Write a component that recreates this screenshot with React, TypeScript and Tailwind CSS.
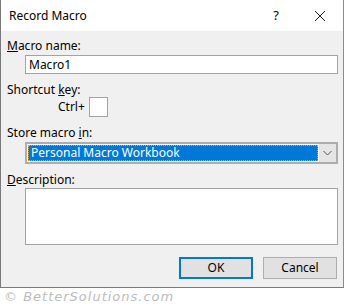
import { useState } from 'react';

export default function App() {
  const [name, setName] = useState('Macro1');

  return (
    <div className="w-[344px] h-[307px] bg-white flex flex-col font-['Noto_Sans',sans-serif] text-[12px] text-black">
      <div className="h-[288px] flex flex-col border-l border-r border-b border-[#7a7a7a] border-r-[#8c8c8c]">
        {/* title bar */}
        <div className="h-[31px] bg-white flex items-center shrink-0">
          <span className="pl-[8px] text-[12px] leading-none">Record Macro</span>
          <span className="ml-auto w-[8px] text-[13px] leading-none text-center mr-[34px]">?</span>
          <svg width="12" height="12" viewBox="0 0 12 12" className="mr-[17px]">
            <path d="M1 1 L11 11 M11 1 L1 11" stroke="#222" strokeWidth="1" fill="none" />
          </svg>
        </div>

        {/* body */}
        <div className="flex-1 bg-[#f0f0f0] flex flex-col pl-[6px] pr-[5px] pt-[7px]">
          <div className="h-[16px] leading-[16px]">
            <span className="underline">M</span>acro name:
          </div>
          <input
            value={name}
            onChange={(e) => setName(e.target.value)}
            className="ml-[18px] mt-[1px] h-[19px] border border-[#a3a3a3] bg-white px-[3px] text-[12px] leading-none outline-none"
          />

          <div className="h-[16px] leading-[16px] mt-[8px]">
            Shortcut <span className="underline">k</span>ey:
          </div>
          <div className="flex items-center h-[20px] mt-[-1px]">
            <span className="ml-[51px]">Ctrl+</span>
            <div className="ml-[4px] w-[19px] h-[20px] border border-[#a3a3a3] bg-white"></div>
          </div>

          <div className="h-[16px] leading-[16px] mt-[8px]">
            Store macro <span className="underline">i</span>n:
          </div>
          <div className="ml-[18px] mt-[1px] h-[22px] flex border-2 border-[#adadad] bg-white">
            <div className="flex-1 m-[1px] bg-[#0078d7] outline outline-1 outline-dotted outline-[#f0a040] -outline-offset-1 flex items-center px-[3px] text-white leading-none">
              Personal Macro Workbook
            </div>
            <div className="w-[17px] bg-[#e5e5e5] flex items-center justify-center">
              <svg width="9" height="6" viewBox="0 0 9 6">
                <path d="M0.5 1 L4.5 5 L8.5 1" stroke="#555" strokeWidth="1" fill="none" />
              </svg>
            </div>
          </div>

          <div className="h-[16px] leading-[16px] mt-[8px]">
            <span className="underline">D</span>escription:
          </div>
          <div className="ml-[18px] h-[57px] border border-[#a3a3a3] bg-white"></div>

          <div className="flex justify-end gap-[10px] mt-[12px] pr-[1px]">
            <button className="w-[74px] h-[22px] border-2 border-[#0078d7] bg-[#e1e1e1] leading-none">OK</button>
            <button className="w-[74px] h-[22px] border border-[#adadad] bg-[#e1e1e1] leading-none">Cancel</button>
          </div>
        </div>
      </div>

      {/* watermark */}
      <div className="pl-[4px] pt-[1px] font-['DejaVu_Sans',sans-serif] italic text-[13px] tracking-[1px] text-[#bcbcbc] leading-[16px]">
        © BetterSolutions.com
      </div>
    </div>
  );
}
